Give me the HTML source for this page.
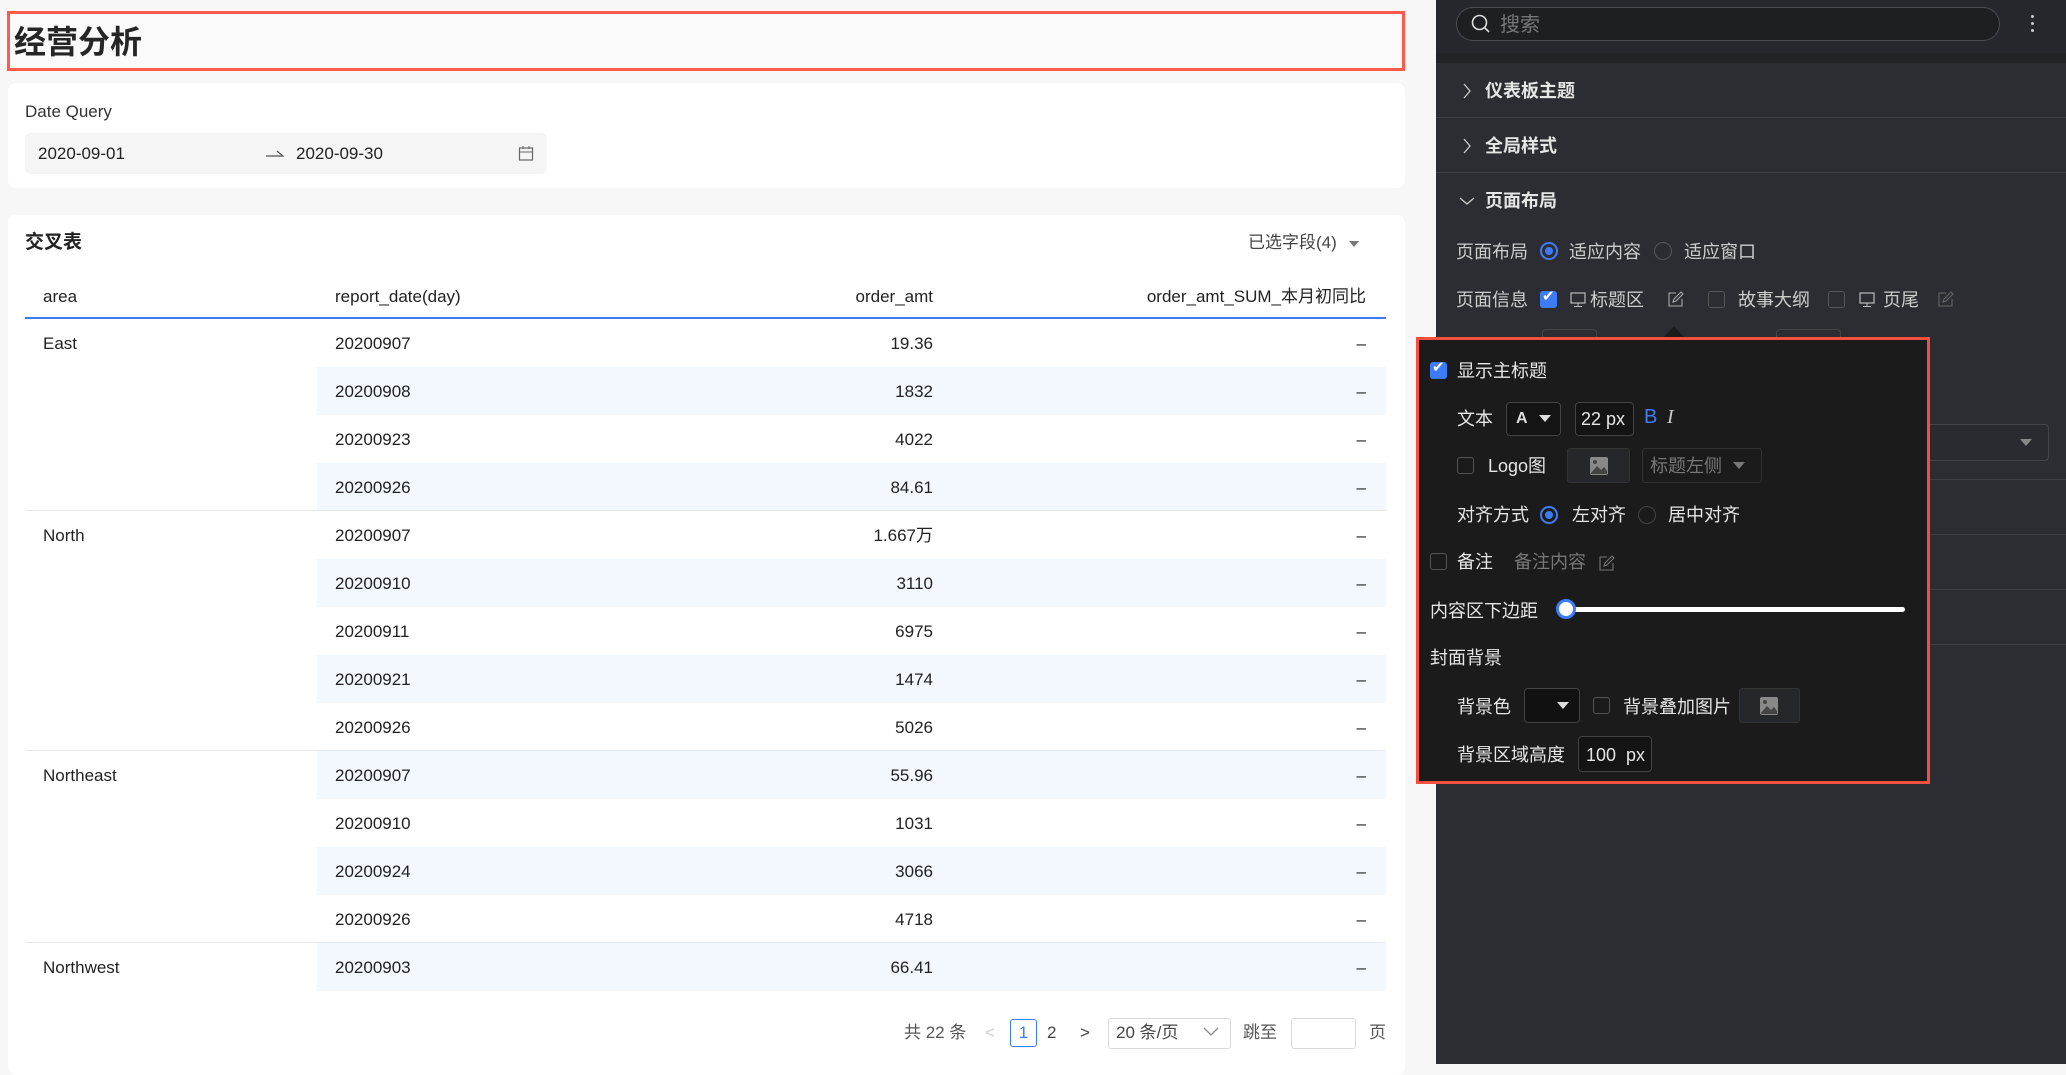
<!DOCTYPE html>
<html><head><meta charset="utf-8"><style>
*{margin:0;padding:0;box-sizing:border-box}
html,body{width:2066px;height:1064px}
body{overflow:hidden;background:#f7f7f7;font-family:"Liberation Sans","Noto Sans CJK SC",sans-serif;position:relative;color:#222}
.a{position:absolute;white-space:nowrap}
.card{position:absolute;background:#fff;border-radius:8px}
.t{font-size:17px;color:#222;line-height:20px}
.dk{color:#e6e6e6;font-size:18px;line-height:20px}
.cb{position:absolute;width:17px;height:17px;border:1px solid #555;border-radius:3px}
.cbon{background:#3e7cf7;border-color:#3e7cf7}
.rad{position:absolute;width:18px;height:18px;border:1px solid #555;border-radius:50%}
.radon{border:2px solid #3e7cf7}
.radon:after{content:"";position:absolute;left:3px;top:3px;width:8px;height:8px;border-radius:50%;background:#3e7cf7}
.box{position:absolute;border:1px solid #444;border-radius:4px;background:#141414}
.tri{width:0;height:0;border-left:6px solid transparent;border-right:6px solid transparent;border-top:7px solid #ccc;position:absolute}
</style></head><body>
<div class="a" style="left:7px;top:11px;width:1398px;height:60px;border:3px solid #ff5a4c;background:#fafafa"></div>
<div class="a" style="left:14px;top:22px;font-size:32px;font-weight:bold;color:#262626;line-height:40px">经营分析</div>
<div class="card" style="left:8px;top:83px;width:1397px;height:105px"></div>
<div class="a t" style="left:25px;top:102px;color:#333">Date Query</div>
<div class="a" style="left:25px;top:133px;width:522px;height:41px;background:#f5f5f5;border-radius:6px"></div>
<div class="a t" style="left:38px;top:144px">2020-09-01</div>
<svg class="a" style="left:265px;top:148px" width="20" height="10"><path d="M1 8 H18 L12 3" fill="none" stroke="#555" stroke-width="1.2"/></svg>
<div class="a t" style="left:296px;top:144px">2020-09-30</div>
<svg class="a" style="left:518px;top:145px" width="16" height="17" viewBox="0 0 16 17"><rect x="1.5" y="3" width="13" height="12" fill="none" stroke="#666" stroke-width="1.2"/><line x1="1.5" y1="7" x2="14.5" y2="7" stroke="#666"/><line x1="5" y1="1" x2="5" y2="4" stroke="#666"/><line x1="11" y1="1" x2="11" y2="4" stroke="#666"/></svg>
<div class="card" style="left:8px;top:215px;width:1397px;height:860px"></div>
<div class="a" style="left:25px;top:231px;font-size:19px;font-weight:bold;line-height:24px">交叉表</div>
<div class="a t" style="left:1248px;top:233px;color:#444">已选字段(4)</div>
<div class="tri" style="left:1349px;top:241px;border-top-color:#777;border-left-width:5px;border-right-width:5px;border-top-width:6px"></div>
<div class="a t" style="left:43px;top:287px">area</div>
<div class="a t" style="left:335px;top:287px">report_date(day)</div>
<div class="a t" style="left:830px;top:287px;width:103px;text-align:right">order_amt</div>
<div class="a t" style="left:1100px;top:287px;width:266px;text-align:right">order_amt_SUM_本月初同比</div>
<div class="a" style="left:25px;top:317px;width:1361px;height:2px;background:#3e7cf7"></div>
<div id="rows"></div>
<script>
var d=[["East","20200907","19.36"],["","20200908","1832"],["","20200923","4022"],["","20200926","84.61"],["North","20200907","1.667万"],["","20200910","3110"],["","20200911","6975"],["","20200921","1474"],["","20200926","5026"],["Northeast","20200907","55.96"],["","20200910","1031"],["","20200924","3066"],["","20200926","4718"],["Northwest","20200903","66.41"]];
var h="";
for(var i=0;i<d.length;i++){var y=319+i*48;
if(i%2==1)h+='<div class="a" style="left:317px;top:'+y+'px;width:1069px;height:48px;background:#f3f7fe"></div>';
if(d[i][0]&&i>0)h+='<div class="a" style="left:25px;top:'+(y-1)+'px;width:1361px;height:1px;background:#e6e8ec"></div>';
h+='<div class="a t" style="left:43px;top:'+(y+15)+'px">'+d[i][0]+'</div><div class="a t" style="left:335px;top:'+(y+15)+'px">'+d[i][1]+'</div><div class="a t" style="left:800px;top:'+(y+15)+'px;width:133px;text-align:right">'+d[i][2]+'</div><div class="a t" style="left:1340px;top:'+(y+15)+'px;width:26px;text-align:right">–</div>';}
document.getElementById("rows").innerHTML=h;
</script>
<div class="a" style="left:8px;top:1002px;width:1397px;height:62px;background:#fff"></div>
<div class="a t" style="left:904px;top:1023px;color:#555">共 22 条</div>
<div class="a t" style="left:985px;top:1023px;color:#ccc">&lt;</div>
<div class="a" style="left:1010px;top:1019px;width:27px;height:28px;border:1px solid #3e7cf7;border-radius:3px;color:#3e7cf7;font-size:17px;text-align:center;line-height:26px">1</div>
<div class="a t" style="left:1047px;top:1023px;color:#444">2</div>
<div class="a t" style="left:1080px;top:1023px;color:#444">&gt;</div>
<div class="a" style="left:1108px;top:1018px;width:123px;height:31px;border:1px solid #d9d9d9;border-radius:3px"></div>
<div class="a t" style="left:1116px;top:1023px;color:#444">20 条/页</div>
<svg class="a" style="left:1203px;top:1027px" width="16" height="10"><path d="M1 1 L8 8 L15 1" fill="none" stroke="#888" stroke-width="1.3"/></svg>
<div class="a t" style="left:1243px;top:1023px;color:#555">跳至</div>
<div class="a" style="left:1291px;top:1018px;width:65px;height:31px;border:1px solid #d9d9d9;border-radius:3px"></div>
<div class="a t" style="left:1369px;top:1023px;color:#555">页</div>
<div class="a" style="left:1436px;top:0;width:630px;height:1064px;background:#2c2d33"></div>
<div class="a" style="left:1436px;top:0;width:630px;height:53px;background:#26272c"></div>
<div class="a" style="left:1436px;top:53px;width:630px;height:10px;background:#232428"></div>
<div class="a" style="left:1456px;top:7px;width:544px;height:34px;border:1px solid #4a4b50;border-radius:17px;background:#1e1f23"></div>
<svg class="a" style="left:1470px;top:13px" width="22" height="22"><circle cx="9.5" cy="9.5" r="7" fill="none" stroke="#ddd" stroke-width="1.6"/><line x1="14.5" y1="14.5" x2="19" y2="19" stroke="#ddd" stroke-width="1.6"/></svg>
<div class="a" style="left:1500px;top:14px;font-size:20px;color:#777;line-height:22px">搜索</div>
<div class="a" style="left:2031px;top:15px;width:3px;height:3px;background:#ccc;border-radius:2px;box-shadow:0 7px 0 #ccc,0 14px 0 #ccc"></div>
<svg class="a" style="left:1462px;top:83px" width="10" height="16"><path d="M2 1 L8 8 L2 15" fill="none" stroke="#ccc" stroke-width="1.3"/></svg>
<div class="a dk" style="left:1485px;top:81px;font-weight:bold">仪表板主题</div>
<div class="a" style="left:1436px;top:117px;width:630px;height:1px;background:#3e3f45"></div>
<svg class="a" style="left:1462px;top:138px" width="10" height="16"><path d="M2 1 L8 8 L2 15" fill="none" stroke="#ccc" stroke-width="1.3"/></svg>
<div class="a dk" style="left:1485px;top:136px;font-weight:bold">全局样式</div>
<div class="a" style="left:1436px;top:172px;width:630px;height:1px;background:#3e3f45"></div>
<svg class="a" style="left:1459px;top:196px" width="16" height="10"><path d="M1 2 L8 8 L15 2" fill="none" stroke="#ccc" stroke-width="1.3"/></svg>
<div class="a dk" style="left:1485px;top:191px;font-weight:bold">页面布局</div>
<div class="a dk" style="left:1456px;top:242px;color:#ccc">页面布局</div>
<div class="rad radon" style="left:1540px;top:242px"></div>
<div class="a dk" style="left:1569px;top:242px;color:#ccc">适应内容</div>
<div class="rad" style="left:1654px;top:242px"></div>
<div class="a dk" style="left:1684px;top:242px;color:#ccc">适应窗口</div>
<div class="a dk" style="left:1456px;top:290px;color:#ccc">页面信息</div>
<div class="cb cbon" style="left:1540px;top:291px"></div><div class="a" style="left:1542px;top:287px;color:#fff;font-size:15px">✔</div>
<svg class="a" style="left:1570px;top:292px" width="16" height="16"><rect x="1" y="1" width="14" height="10" fill="none" stroke="#bbb" stroke-width="1.2"/><line x1="8" y1="11" x2="8" y2="14" stroke="#bbb"/><line x1="4" y1="14.5" x2="12" y2="14.5" stroke="#bbb"/></svg>
<div class="a dk" style="left:1590px;top:290px;color:#ccc">标题区</div>
<svg class="a" style="left:1667px;top:291px" width="17" height="17"><path d="M9 2 H2 V15 H15 V8 M6 11 L7 8 L14 1 L16 3 L9 10 Z" fill="none" stroke="#aaa" stroke-width="1.1"/></svg>
<div class="cb" style="left:1708px;top:291px"></div>
<div class="a dk" style="left:1738px;top:290px;color:#ccc">故事大纲</div>
<div class="cb" style="left:1828px;top:291px"></div>
<svg class="a" style="left:1859px;top:292px" width="16" height="16"><rect x="1" y="1" width="14" height="10" fill="none" stroke="#bbb" stroke-width="1.2"/><line x1="8" y1="11" x2="8" y2="14" stroke="#bbb"/><line x1="4" y1="14.5" x2="12" y2="14.5" stroke="#bbb"/></svg>
<div class="a dk" style="left:1883px;top:290px;color:#ccc">页尾</div>
<svg class="a" style="left:1937px;top:291px" width="17" height="17"><path d="M9 2 H2 V15 H15 V8 M6 11 L7 8 L14 1 L16 3 L9 10 Z" fill="none" stroke="#666" stroke-width="1.1"/></svg>
<div class="a" style="left:1542px;top:329px;width:55px;height:20px;border:1px solid #444;border-radius:4px"></div>
<div class="a" style="left:1776px;top:329px;width:65px;height:20px;border:1px solid #444;border-radius:4px"></div>
<div class="a" style="left:1566px;top:424px;width:483px;height:37px;border:1px solid #44454b;border-radius:4px;background:#2a2b30"></div>
<div class="tri" style="left:2020px;top:439px;border-top-color:#888"></div>
<div class="a" style="left:1436px;top:479px;width:630px;height:1px;background:#3e3f45"></div>
<div class="a" style="left:1436px;top:534px;width:630px;height:1px;background:#3e3f45"></div>
<div class="a" style="left:1436px;top:589px;width:630px;height:1px;background:#3e3f45"></div>
<div class="a" style="left:1436px;top:644px;width:630px;height:1px;background:#3e3f45"></div>
<div class="a" style="left:1664px;top:326px;width:0;height:0;border-left:10px solid transparent;border-right:10px solid transparent;border-bottom:11px solid #1b1b1b"></div>
<div class="a" style="left:1416px;top:337px;width:514px;height:447px;border:3px solid #f5503f;background:#1b1b1b"></div>
<div class="cb cbon" style="left:1430px;top:362px"></div><div class="a" style="left:1432px;top:358px;color:#fff;font-size:15px">✔</div>
<div class="a dk" style="left:1457px;top:361px">显示主标题</div>
<div class="a dk" style="left:1457px;top:409px">文本</div>
<div class="box" style="left:1506px;top:402px;width:55px;height:34px"></div>
<div class="a" style="left:1516px;top:410px;color:#ddd;font-size:16px;font-weight:bold">A</div>
<div class="tri" style="left:1539px;top:415px;border-top-color:#ddd"></div>
<div class="box" style="left:1575px;top:402px;width:59px;height:34px"></div>
<div class="a dk" style="left:1581px;top:409px">22 px</div>
<div class="a" style="left:1644px;top:406px;color:#3e7cf7;font-size:20px">B</div>
<div class="a" style="left:1667px;top:406px;color:#ccc;font-size:20px;font-style:italic;font-family:'Liberation Serif',serif">I</div>
<div class="cb" style="left:1457px;top:457px"></div>
<div class="a dk" style="left:1488px;top:456px">Logo图</div>
<div class="a" style="left:1567px;top:448px;width:63px;height:35px;border:1px solid #333;border-radius:3px;background:#26272b"></div>
<svg class="a" style="left:1589px;top:456px" width="20" height="20"><rect x="1" y="1" width="18" height="18" rx="2" fill="#888"/><path d="M2 17 L8 10 L12 14 L15 11 L18 15 V18 H2Z" fill="#444"/><circle cx="6" cy="6" r="2" fill="#444"/></svg>
<div class="a" style="left:1642px;top:448px;width:120px;height:35px;border:1px solid #333;border-radius:3px"></div>
<div class="a dk" style="left:1650px;top:456px;color:#777">标题左侧</div>
<div class="tri" style="left:1733px;top:462px;border-top-color:#777"></div>
<div class="a dk" style="left:1457px;top:505px">对齐方式</div>
<div class="rad radon" style="left:1540px;top:506px"></div>
<div class="a dk" style="left:1572px;top:505px">左对齐</div>
<div class="rad" style="left:1638px;top:506px;border-color:#444"></div>
<div class="a dk" style="left:1668px;top:505px">居中对齐</div>
<div class="cb" style="left:1430px;top:553px"></div>
<div class="a dk" style="left:1457px;top:552px">备注</div>
<div class="a dk" style="left:1514px;top:552px;color:#777">备注内容</div>
<svg class="a" style="left:1598px;top:555px" width="17" height="17"><path d="M9 2 H2 V15 H15 V8 M6 11 L7 8 L14 1 L16 3 L9 10 Z" fill="none" stroke="#777" stroke-width="1.1"/></svg>
<div class="a dk" style="left:1430px;top:601px">内容区下边距</div>
<div class="a" style="left:1567px;top:607px;width:338px;height:5px;background:#fff;border-radius:3px"></div>
<div class="a" style="left:1556px;top:599px;width:20px;height:20px;border-radius:50%;background:#fff;border:3px solid #3e7cf7"></div>
<div class="a dk" style="left:1430px;top:648px">封面背景</div>
<div class="a dk" style="left:1457px;top:697px">背景色</div>
<div class="box" style="left:1524px;top:688px;width:56px;height:35px;background:#111"></div>
<div class="tri" style="left:1557px;top:702px;border-top-color:#ddd"></div>
<div class="cb" style="left:1593px;top:697px"></div>
<div class="a dk" style="left:1623px;top:697px">背景叠加图片</div>
<div class="a" style="left:1739px;top:688px;width:61px;height:35px;border:1px solid #333;border-radius:3px;background:#26272b"></div>
<svg class="a" style="left:1759px;top:696px" width="20" height="20"><rect x="1" y="1" width="18" height="18" rx="2" fill="#888"/><path d="M2 17 L8 10 L12 14 L15 11 L18 15 V18 H2Z" fill="#444"/><circle cx="6" cy="6" r="2" fill="#444"/></svg>
<div class="a dk" style="left:1457px;top:745px">背景区域高度</div>
<div class="box" style="left:1578px;top:736px;width:74px;height:36px"></div>
<div class="a dk" style="left:1586px;top:745px">100&nbsp; px</div>
</body></html>
